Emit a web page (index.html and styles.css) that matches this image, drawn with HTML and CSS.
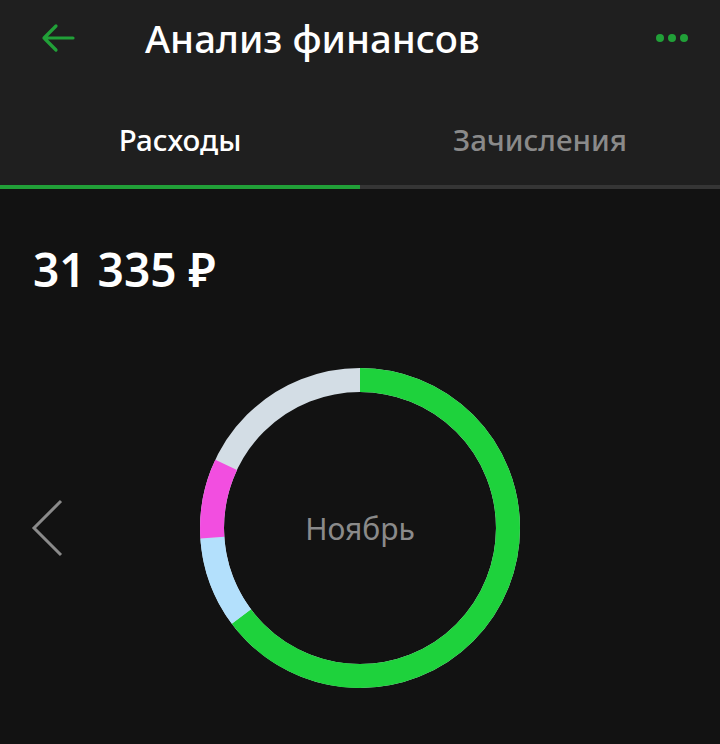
FILE: index.html
```html
<!DOCTYPE html>
<html lang="ru">
<head>
<meta charset="utf-8">
<link rel="stylesheet" href="styles.css">
</head>
<body>
<header class="top">
  <div class="bar">
    <svg class="back" width="36" height="30" viewBox="0 0 36 30"><path d="M33 15H4M16 3L4 15l12 12" fill="none" stroke="#21a038" stroke-width="3.2" stroke-linecap="round" stroke-linejoin="round"/></svg>
    <h1 class="title">Анализ финансов</h1>
    <div class="dots"><span></span><span></span><span></span></div>
  </div>
  <nav class="tabs">
    <div class="tab active">Расходы</div>
    <div class="tab">Зачисления</div>
  </nav>
</header>
<main class="content">
  <div class="sum">31 335 ₽</div>
  <div class="chart-row">
    <svg class="prev" width="34" height="60" viewBox="0 0 34 60"><path d="M30 3L3 30l27 27" fill="none" stroke="#8a8a8a" stroke-width="3"/></svg>
    <div class="donut">
      <svg width="320" height="320" viewBox="0 0 320 320">
        <g transform="rotate(-90 160 160)" fill="none" stroke-width="24">
          <circle cx="160" cy="160" r="148" stroke="#d3dde5"/>
          <circle cx="160" cy="160" r="148" stroke="#1ed23c" stroke-dasharray="602.3 1000"/>
          <circle cx="160" cy="160" r="148" stroke="#b3e0fc" stroke-dasharray="0 602.3 85.2 1000"/>
          <circle cx="160" cy="160" r="148" stroke="#f24ee0" stroke-dasharray="0 687.5 74.9 1000"/>
        </g>
      </svg>
      <div class="month">Ноябрь</div>
    </div>
  </div>
</main>
</body>
</html>
```
FILE: styles.css
```css
* { box-sizing: border-box; }
html, body { margin: 0; padding: 0; }
body {
  width: 720px;
  height: 744px;
  background: #121212;
  font-family: "Noto Sans", "Open Sans", sans-serif;
  overflow: hidden;
}
.top { background: #1f1f1f; }
.bar {
  height: 80px;
  display: flex;
  align-items: center;
  padding: 0 32px 0 40px;
}
.back { display: block; margin-top: -4px; }
.title {
  margin: 0 0 0 69px;
  flex: 1;
  font-size: 38.4px;
  font-weight: 500;
  color: #ffffff;
  line-height: 1;
  margin-top: -4px;
}
.dots { display: flex; gap: 4px; margin-top: -4px; }
.dots span {
  width: 8px; height: 8px; border-radius: 50%; background: #21a038;
}
.tabs { display: flex; }
.tab {
  flex: 1;
  height: 109px;
  display: flex;
  align-items: center;
  justify-content: center;
  font-size: 29.5px;
  font-weight: 500;
  color: #8a8a8a;
  border-bottom: 4px solid #353535;
  padding-top: 13px;
}
.tab.active { color: #ffffff; border-bottom-color: #21a038; }
.content { padding: 50px 0 0 0; }
.sum {
  padding-left: 33px;
  font-size: 46px;
  font-weight: 600;
  color: #ffffff;
  line-height: 60px;
}
.chart-row {
  position: relative;
  display: flex;
  justify-content: center;
  margin-top: 69px;
}
.prev { position: absolute; left: 31px; top: 130px; }
.donut { position: relative; width: 320px; height: 320px; }
.donut svg { display: block; }
.month {
  position: absolute;
  inset: 0;
  display: flex;
  align-items: center;
  justify-content: center;
  font-size: 30px;
  color: #8a8a8a;
}
```
